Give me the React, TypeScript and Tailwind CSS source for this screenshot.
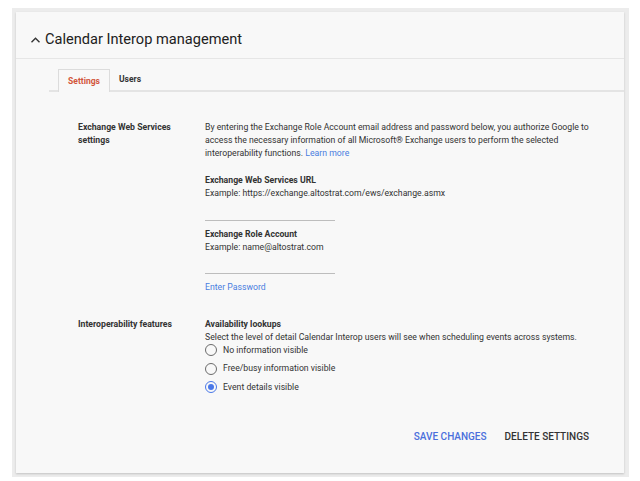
import React from "react";

function Radio({ checked, label }: { checked?: boolean; label: string }) {
  return (
    <div className="flex h-[18.5px] items-center">
      <span
        className={
          "flex h-[12px] w-[12px] items-center justify-center rounded-full border-[1.3px] " +
          (checked ? "border-[#4a78e8]" : "border-[#6b6b6b]")
        }
      >
        {checked && <span className="h-[6px] w-[6px] rounded-full bg-[#4a78e8]" />}
      </span>
      <span className="ml-[6px] text-[8.7px] text-[#333]">{label}</span>
    </div>
  );
}

export default function App() {
  return (
    <div
      className="h-[481px] w-[640px] bg-white pt-[8px] pl-[12px] pr-[11px] pb-[4px]"
      style={{ fontFamily: "Roboto, 'Liberation Sans', sans-serif" }}
    >
      <div className="h-full bg-[#ececec] pt-[4px] pl-[4px] pr-[5px] pb-[4px]">
        <div className="flex h-full flex-col bg-[#f8f8f8] shadow-[0_1px_2px_rgba(0,0,0,0.18)]">
          {/* header */}
          <div className="flex h-[47px] items-center border-b border-[#e6e6e6] pl-[14px] pt-[9px]">
            <svg width="11" height="8" viewBox="0 0 11 8" className="mt-[1px]">
              <path d="M1.5 6.2 L5.5 2.2 L9.5 6.2" fill="none" stroke="#333" strokeWidth="1.4" />
            </svg>
            <span className="ml-[4px] text-[14.6px] text-[#212121]">Calendar Interop management</span>
          </div>

          {/* tabs */}
          <div className="ml-[33px] mt-[10px] flex border-b-2 border-[#e4e4e4] pl-[9px]">
            <div className="-mb-[2px] flex h-[23px] w-[52px] items-center justify-center border border-b-0 border-[#dcdcdc] bg-[#f8f8f8] text-[8.5px] font-bold text-[#d2553a]">
              Settings
            </div>
            <div className="ml-[9px] flex h-[21px] items-center text-[8.5px] font-bold text-[#333]">Users</div>
          </div>

          {/* body */}
          <div className="flex-1 pl-[62px] pr-[30px] pt-[29px] text-[8.7px] leading-[13px] text-[#333]">
            <div className="flex">
              <div className="w-[127px] shrink-0 font-bold">
                Exchange Web Services
                <br />
                settings
              </div>
              <div className="flex-1">
                <p className="w-[400px]">
                  By entering the Exchange Role Account email address and password below, you authorize Google to
                  access the necessary information of all Microsoft® Exchange users to perform the selected
                  interoperability functions. <span className="text-[#4a7de0]">Learn more</span>
                </p>
                <div className="mt-[14px] font-bold">Exchange Web Services URL</div>
                <div>Example: https://exchange.altostrat.com/ews/exchange.asmx</div>
                <div className="mt-[20px] h-px w-[130px] bg-[#bdbdbd]" />
                <div className="mt-[7px] font-bold">Exchange Role Account</div>
                <div>Example: name@altostrat.com</div>
                <div className="mt-[19px] h-px w-[130px] bg-[#bdbdbd]" />
                <div className="mt-[7px] text-[#4a7de0]">Enter Password</div>
              </div>
            </div>

            <div className="mt-[24px] flex">
              <div className="w-[127px] shrink-0 font-bold">Interoperability features</div>
              <div className="flex-1">
                <div className="font-bold">Availability lookups</div>
                <div>Select the level of detail Calendar Interop users will see when scheduling events across systems.</div>
                <div className="-mt-[3px]">
                  <Radio label="No information visible" />
                  <Radio label="Free/busy information visible" />
                  <Radio checked label="Event details visible" />
                </div>
              </div>
            </div>

            <div className="mt-[33px] flex justify-end pr-[5px] text-[10px] font-medium uppercase">
              <span className="text-[#4a6fdc]">Save changes</span>
              <span className="ml-[18px] text-[#333]">Delete settings</span>
            </div>
          </div>
        </div>
      </div>
    </div>
  );
}
